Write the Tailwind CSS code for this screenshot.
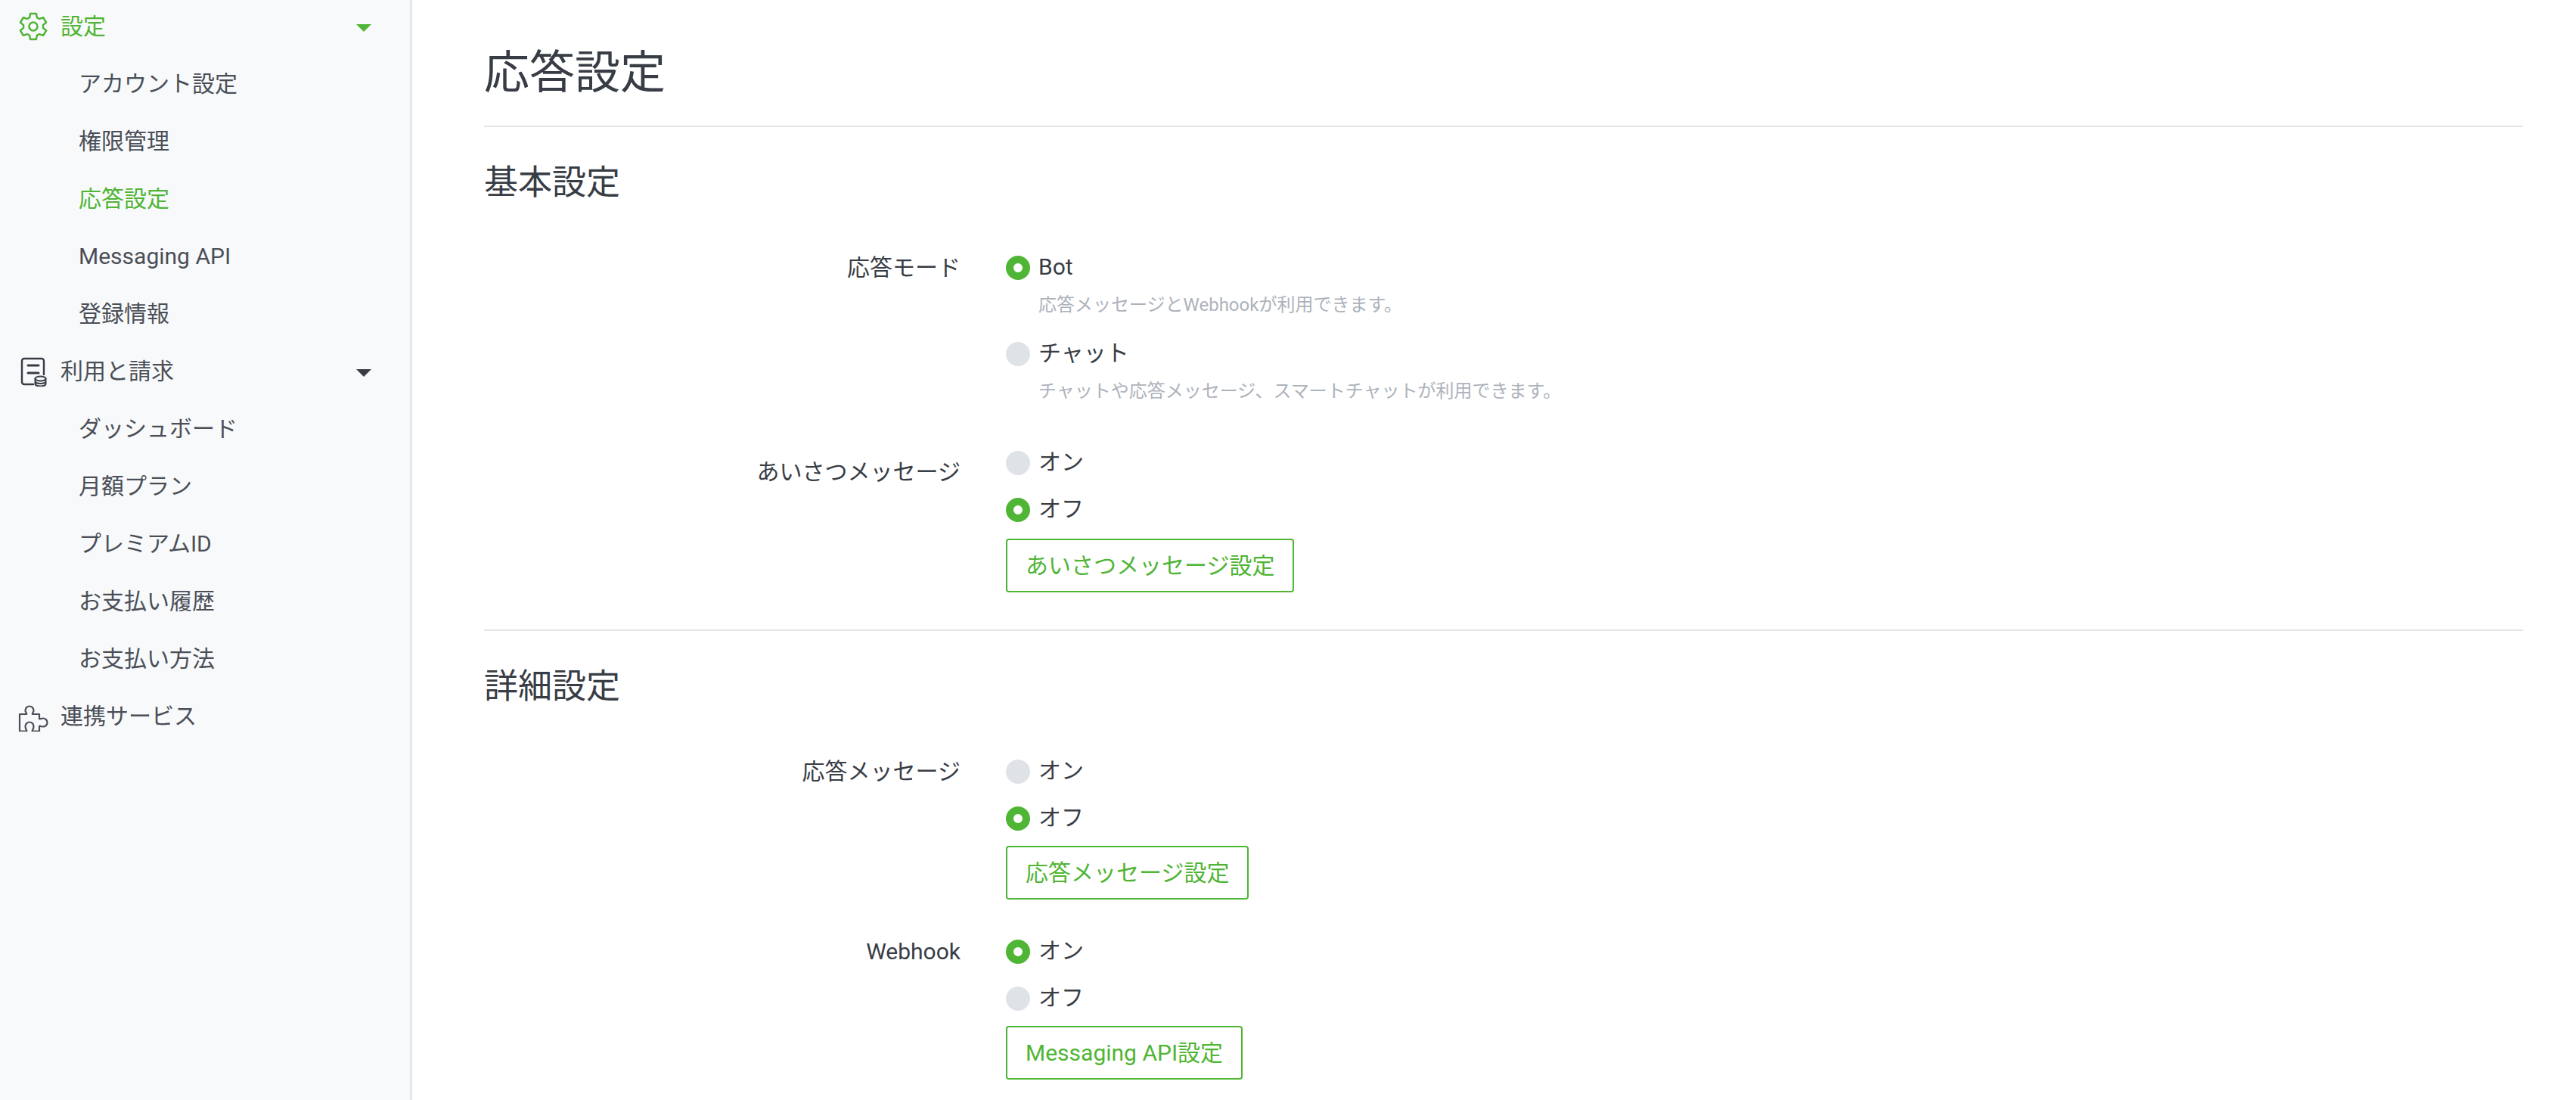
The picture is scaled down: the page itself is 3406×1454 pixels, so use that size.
<!DOCTYPE html>
<html lang="ja">
<head>
  <meta charset="UTF-8">
  <title>応答設定</title>
  <script src="https://cdn.jsdelivr.net/npm/@tailwindcss/browser@4"></script>
</head>
<body class="bg-white h-[1454px] overflow-hidden font-['Roboto','Noto_Sans_CJK_JP',sans-serif] text-[#383d45]">
  <div class="flex h-full">
    <!-- sidebar -->
    <aside class="w-[545px] shrink-0 h-full bg-[#f8f9fb] border-r-[3px] border-[#e4e7ec] text-[30px] text-[#4a4f57] overflow-hidden">
      <div class="-mt-[4px]">
        <div class="h-[76px] flex items-center text-[#4fb534]">
          <svg class="w-[40px] h-[40px] ml-[24px] mr-[16px] shrink-0 translate-y-px" viewBox="0 0 40 40" fill="none" stroke="currentColor" stroke-width="2.6" stroke-linejoin="round">
            <path transform="translate(20 20) scale(.97 .95) translate(-20 -20)" d="M16 2H24L25 7.500 28.330 9.420 33.590 7.540 37.590 14.460 33.330 18.080V21.920L37.590 25.540 33.590 32.460 28.330 30.580 25 32.500 24 38H16L15 32.500 11.670 30.580 6.410 32.460 2.410 25.540 6.670 21.920V18.080L2.410 14.460 6.410 7.540 11.670 9.420 15 7.500Z"/>
            <circle cx="20" cy="20" r="5.500"/>
          </svg>
          <span>設定</span>
          <span class="ml-auto mr-[51px] w-0 h-0 border-x-[10px] border-x-transparent border-t-[10px] border-t-[#4fb534] translate-y-[3px]"></span>
        </div>
        <div class="h-[76px] flex items-center pl-[104px]">アカウント設定</div>
        <div class="h-[76px] flex items-center pl-[104px]">権限管理</div>
        <div class="h-[76px] flex items-center pl-[104px] text-[#4fb534]">応答設定</div>
        <div class="h-[76px] flex items-center pl-[104px]">Messaging API</div>
        <div class="h-[76px] flex items-center pl-[104px]">登録情報</div>
        <div class="h-[76px] flex items-center">
          <svg class="w-[40px] h-[40px] ml-[24px] mr-[16px] shrink-0 translate-y-px" viewBox="0 0 40 40" fill="none" stroke="#383d45" stroke-width="2.400" stroke-linejoin="round" stroke-linecap="round">
            <path d="M20 37H8a3 3 0 0 1-3-3V6a3 3 0 0 1 3-3h23a3 3 0 0 1 3 3v18"/>
            <path d="M13 12h14M13 22h14" stroke-width="3"/>
            <ellipse cx="29.500" cy="29.500" rx="7" ry="3" stroke-width="2"/>
            <path d="M22.500 29.500v7c0 1.700 3.100 3 7 3s7-1.300 7-3v-7M22.500 33c0 1.700 3.100 3 7 3s7-1.300 7-3" stroke-width="2"/>
          </svg>
          <span>利用と請求</span>
          <span class="ml-auto mr-[51px] w-0 h-0 border-x-[10px] border-x-transparent border-t-[10px] border-t-[#383d45] translate-y-[3px]"></span>
        </div>
        <div class="h-[76px] flex items-center pl-[104px]">ダッシュボード</div>
        <div class="h-[76px] flex items-center pl-[104px]">月額プラン</div>
        <div class="h-[76px] flex items-center pl-[104px]">プレミアムID</div>
        <div class="h-[76px] flex items-center pl-[104px]">お支払い履歴</div>
        <div class="h-[76px] flex items-center pl-[104px]">お支払い方法</div>
        <div class="h-[76px] flex items-center">
          <svg class="w-[40px] h-[40px] ml-[24px] mr-[16px] shrink-0 translate-y-px" viewBox="0 0 40 40" fill="none" stroke="#4a4f57" stroke-width="2.200" stroke-linejoin="round">
            <path d="M2 17h9c1-1-1.500-2-1.500-5a5.500 5.500 0 0 1 11 0c0 3-2.500 4-1.500 5h9v6c1 1 2-.5 5-.5a5.500 5.500 0 0 1 0 11c-3 0-4-1.500-5-.5v6.500H18.500c0-1 2-2.500 2-6.500a5.500 5.500 0 0 0-11 0c0 4 2 5.500 2 6.500H2z"/>
          </svg>
          <span>連携サービス</span>
        </div>
      </div>
    </aside>

    <!-- main -->
    <main class="flex-1 pl-[95px] pr-[70px] text-[30px]">
      <h1 class="pt-[62px] pb-[34px] text-[60px] leading-[70px] border-b-[2px] border-[#e5e5e5]">応答設定</h1>
      <h2 class="mt-[44px] text-[45px] leading-[60px]">基本設定</h2>

      <div class="mt-[66px] grid grid-cols-[630px_1fr] gap-x-[60px]">
        <div class="text-right leading-[32px]">応答モード</div>
        <div>
          <label class="flex items-center gap-[11px] h-[32px]">
            <span class="w-[32px] h-[32px] rounded-full border-[10px] border-[#4fb534] bg-white"></span><span class="-translate-y-[2px]">Bot</span>
          </label>
          <p class="mt-[18px] ml-[43px] text-[24px] leading-[30px] text-[#adb2bb]">応答メッセージとWebhookが利用できます。</p>
          <label class="mt-[34px] flex items-center gap-[11px] h-[32px]">
            <span class="w-[32px] h-[32px] rounded-full bg-[#dfe2e7]"></span><span class="-translate-y-[2px]">チャット</span>
          </label>
          <p class="mt-[18px] ml-[43px] text-[24px] leading-[30px] text-[#adb2bb]">チャットや応答メッセージ、スマートチャットが利用できます。</p>
        </div>
      </div>

      <div class="mt-[64px] grid grid-cols-[630px_1fr] gap-x-[60px]">
        <div class="mt-[12px] text-right leading-[32px]">あいさつメッセージ</div>
        <div>
          <label class="flex items-center gap-[11px] h-[32px]">
            <span class="w-[32px] h-[32px] rounded-full bg-[#dfe2e7]"></span><span class="-translate-y-[2px]">オン</span>
          </label>
          <label class="mt-[30px] flex items-center gap-[11px] h-[32px]">
            <span class="w-[32px] h-[32px] rounded-full border-[10px] border-[#4fb534] bg-white"></span><span class="-translate-y-[2px]">オフ</span>
          </label>
          <button class="mt-[22px] h-[71px] px-[24px] border-2 border-[#4fb534] rounded-[4px] text-[#4fb534]">あいさつメッセージ設定</button>
        </div>
      </div>

      <div class="mt-[49px] border-t-[2px] border-[#e5e5e5]"></div>
      <h2 class="mt-[44px] text-[45px] leading-[60px]">詳細設定</h2>

      <div class="mt-[66px] grid grid-cols-[630px_1fr] gap-x-[60px]">
        <div class="text-right leading-[32px]">応答メッセージ</div>
        <div>
          <label class="flex items-center gap-[11px] h-[32px]">
            <span class="w-[32px] h-[32px] rounded-full bg-[#dfe2e7]"></span><span class="-translate-y-[2px]">オン</span>
          </label>
          <label class="mt-[30px] flex items-center gap-[11px] h-[32px]">
            <span class="w-[32px] h-[32px] rounded-full border-[10px] border-[#4fb534] bg-white"></span><span class="-translate-y-[2px]">オフ</span>
          </label>
          <button class="mt-[20px] h-[71px] px-[24px] border-2 border-[#4fb534] rounded-[4px] text-[#4fb534]">応答メッセージ設定</button>
        </div>
      </div>

      <div class="mt-[53px] grid grid-cols-[630px_1fr] gap-x-[60px]">
        <div class="text-right leading-[32px]">Webhook</div>
        <div>
          <label class="flex items-center gap-[11px] h-[32px]">
            <span class="w-[32px] h-[32px] rounded-full border-[10px] border-[#4fb534] bg-white"></span><span class="-translate-y-[2px]">オン</span>
          </label>
          <label class="mt-[30px] flex items-center gap-[11px] h-[32px]">
            <span class="w-[32px] h-[32px] rounded-full bg-[#dfe2e7]"></span><span class="-translate-y-[2px]">オフ</span>
          </label>
          <button class="mt-[20px] h-[71px] px-[24px] border-2 border-[#4fb534] rounded-[4px] text-[#4fb534]">Messaging API設定</button>
        </div>
      </div>
    </main>
  </div>
</body>
</html>
